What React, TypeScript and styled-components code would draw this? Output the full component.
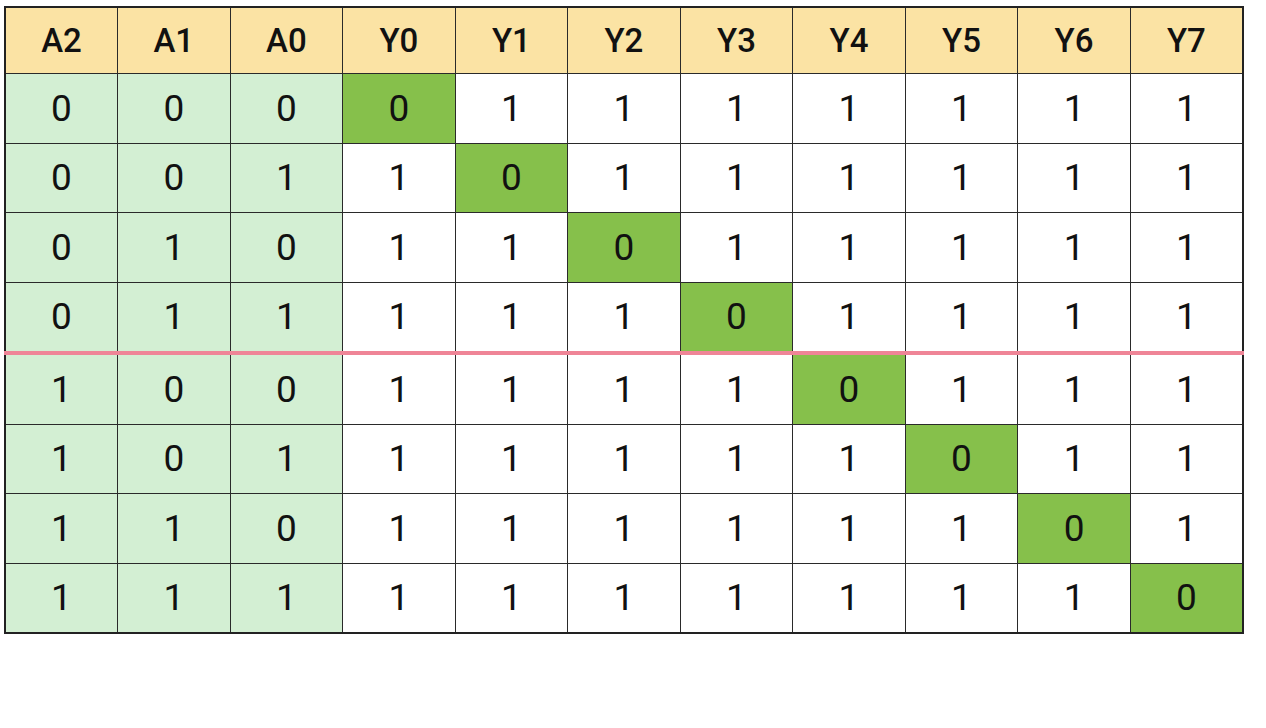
import React from "react";
import styled, { createGlobalStyle } from "styled-components";

const Global = createGlobalStyle`
  html, body { margin: 0; padding: 0; background: #ffffff; }
  body { font-family: Roboto, "Liberation Sans", Arial, sans-serif; }
`;

const Page = styled.div`
  padding: 6px 0 0 4px;
  width: 1266px;
  height: 728px;
  box-sizing: border-box;
`;

const Table = styled.table`
  border-collapse: collapse;
  table-layout: fixed;
  width: 1240px;
  border: 2px solid #222;
`;

const HeadCell = styled.th`
  background: #fbe3a4;
  height: 65px;
  border: 1.5px solid #2a2a2a;
  font-weight: 500;
  font-size: 33px;
  color: #111;
  text-align: center;
  vertical-align: middle;
  padding: 0;
`;

const Cell = styled.td<{ $kind: "input" | "hit" | "plain"; $split?: boolean }>`
  height: 68.5px;
  border: 1.5px solid #2a2a2a;
  ${(p) => (p.$split ? "border-top: 4px solid #ef8597;" : "")}
  background: ${(p) =>
    p.$kind === "input" ? "#d3efd3" : p.$kind === "hit" ? "#86c04b" : "#ffffff"};
  font-size: 37px;
  font-weight: 400;
  color: #111;
  text-align: center;
  vertical-align: middle;
  padding: 0;
`;

const headers = ["A2", "A1", "A0", "Y0", "Y1", "Y2", "Y3", "Y4", "Y5", "Y6", "Y7"];

export default function App() {
  const rows = Array.from({ length: 8 }, (_, i) => i);
  return (
    <Page>
      <Global />
      <Table>
        <thead>
          <tr>
            {headers.map((h) => (
              <HeadCell key={h}>{h}</HeadCell>
            ))}
          </tr>
        </thead>
        <tbody>
          {rows.map((r) => {
            const bits = [(r >> 2) & 1, (r >> 1) & 1, r & 1];
            return (
              <tr key={r}>
                {bits.map((b, j) => (
                  <Cell key={"a" + j} $kind="input" $split={r === 4}>
                    {b}
                  </Cell>
                ))}
                {Array.from({ length: 8 }, (_, k) => (
                  <Cell key={"y" + k} $kind={k === r ? "hit" : "plain"} $split={r === 4}>
                    {k === r ? 0 : 1}
                  </Cell>
                ))}
              </tr>
            );
          })}
        </tbody>
      </Table>
    </Page>
  );
}
